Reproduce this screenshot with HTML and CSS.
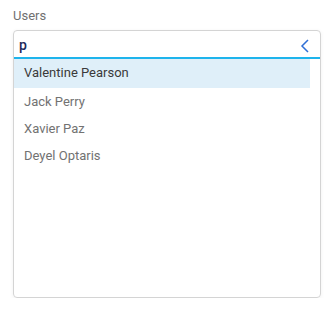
FILE: index.html
```html
<!DOCTYPE html>
<html lang="en">
<head>
  <meta charset="UTF-8" />
  <title>Users</title>
  <link rel="stylesheet" href="styles.css">
</head>
<body>
  <div class="field">
    <label class="field-label" for="users">Users</label>
    <div class="combo">
      <div class="combo-input">
        <input type="text" id="users" value="p" />
        <svg class="chevron" width="10" height="14" viewBox="0 0 10 14">
          <path d="M8 1 L2 7 L8 13" fill="none" stroke="#2f6fd6" stroke-width="1.5" />
        </svg>
      </div>
      <ul class="options">
        <li class="active">Valentine Pearson</li>
        <li>Jack Perry</li>
        <li>Xavier Paz</li>
        <li>Deyel Optaris</li>
      </ul>
    </div>
  </div>
</body>
</html>
```

FILE: styles.css
```css
body {
  margin: 0;
  padding: 7px 14px 0 13px;
  font-family: Roboto, "Noto Sans", sans-serif;
  background: #fff;
}

.field-label {
  display: block;
  font-size: 13px;
  color: #707070;
  height: 23px;
  line-height: 18px;
}

.combo {
  height: 266px;
  border: 1px solid #d4d4d4;
  border-radius: 4px;
  box-shadow: 0 1px 4px rgba(0,0,0,0.06);
  display: flex;
  flex-direction: column;
}

.combo-input {
  display: flex;
  align-items: center;
  height: 26px;
  border-bottom: 2px solid #1eb4ec;
  padding: 0 10px 0 5px;
}

.combo-input input {
  flex: 1;
  border: none;
  outline: none;
  font-family: inherit;
  font-size: 14px;
  font-weight: 500;
  color: #1e2a5a;
  padding: 0;
  margin-top: 2px;
}

.chevron {
  margin-top: 3px;
}

.options {
  list-style: none;
  margin: 0;
  padding: 0 10px 0 0;
}

.options li {
  height: 27px;
  line-height: 27px;
  padding-left: 10px;
  font-size: 13px;
  color: #727272;
}

.options li.active {
  background: #dfeff9;
  color: #3a3a3a;
  height: 29px;
  line-height: 28px;
}
```
